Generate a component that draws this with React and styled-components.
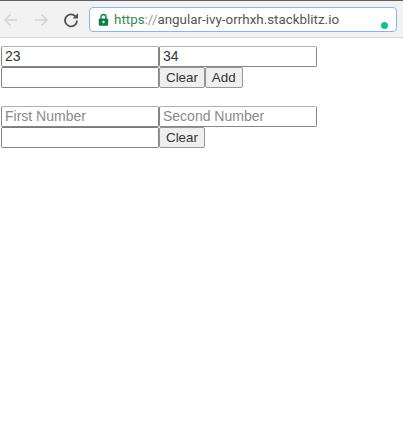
import React from 'react';
import styled, { createGlobalStyle } from 'styled-components';

const Global = createGlobalStyle`
  html, body { margin: 0; padding: 0; background: #fff; }
  body { font-family: "Liberation Sans", Arial, sans-serif; }
`;

const Page = styled.div`
  width: 403px;
  height: 434px;
  overflow: hidden;
  background: #fff;
`;

const Toolbar = styled.div`
  box-sizing: border-box;
  height: 38px;
  display: flex;
  align-items: center;
  padding: 1px 6px 0 1px;
  background: #f2f2f2;
  border-top: 1px solid #5f5f5f;
  border-bottom: 1px solid #d4d4d4;
`;

const NavIcon = styled.svg`
  width: 20px;
  height: 20px;
  margin-right: ${p => p.$gap}px;
  fill: none;
  stroke: ${p => p.$color};
  stroke-width: ${p => p.$weight};
  flex: none;
`;

const AddressBar = styled.div`
  box-sizing: border-box;
  flex: 1;
  height: 25px;
  position: relative;
  display: flex;
  align-items: center;
  gap: 5px;
  padding: 0 7px 0 8px;
  background: #fff;
  border: 1px solid #8ab4ee;
  border-radius: 4px;
  font-family: Roboto, sans-serif;
  font-size: 13.4px;
  color: #555;
`;

const Url = styled.span`
  white-space: nowrap;
`;

const Https = styled.span`
  color: #35875a;
`;

const Slashes = styled.span`
  color: #9a9a9a;
`;

const StatusDot = styled.span`
  position: absolute;
  right: 8px;
  bottom: 2px;
  width: 7px;
  height: 7px;
  border-radius: 50%;
  background: #14c08f;
`;

const Content = styled.div`
  padding: 8px 1px 0;
`;

const Calc = styled.form`
  margin: 0 0 18px;
`;

const Row = styled.div`
  display: flex;
`;

const NumberInput = styled.input`
  box-sizing: border-box;
  width: 158px;
  height: 21px;
  margin: 0;
  padding: 0 3px 2px;
  border: 1px solid #858585;
  border-top-color: ${p => p.$first ? '#b0b0b0' : '#7c7c7c'};
  border-radius: 2px;
  background: #fff;
  color: #333;
  font-family: "Liberation Sans", Arial, sans-serif;
  font-size: 14px;
  outline: none;

  &::placeholder {
    color: #8a8a8a;
    opacity: 1;
  }
`;

const ActionButton = styled.button`
  box-sizing: border-box;
  height: 21px;
  margin: 0;
  padding: 0 6px 1px;
  border: 1px solid #969696;
  border-radius: 2px;
  background: #efefef;
  color: #333;
  font-family: "Liberation Sans", Arial, sans-serif;
  font-size: 13.33px;
`;

function Calculator({ first, second, firstHint, secondHint, withAdd }) {
  return (
    <Calc onSubmit={e => e.preventDefault()}>
      <Row>
        <NumberInput $first defaultValue={first} placeholder={firstHint} />
        <NumberInput $first defaultValue={second} placeholder={secondHint} />
      </Row>
      <Row>
        <NumberInput />
        <ActionButton type="button">Clear</ActionButton>
        {withAdd && <ActionButton type="button">Add</ActionButton>}
      </Row>
    </Calc>
  );
}

export default function App() {
  return (
    <Page>
      <Global />
      <Toolbar>
        <NavIcon viewBox="0 0 20 20" $color="#d4d4d4" $weight={1.6} $gap={10}>
          <path d="M16 10H4M9.5 4.5L4 10l5.5 5.5" />
        </NavIcon>
        <NavIcon viewBox="0 0 20 20" $color="#d4d4d4" $weight={1.6} $gap={10}>
          <path d="M4 10h12M10.5 4.5L16 10l-5.5 5.5" />
        </NavIcon>
        <NavIcon viewBox="0 0 20 20" $color="#555" $weight={1.9} $gap={8}>
          <path d="M14.4 6.3A6 6 0 1 0 16 10.5" />
          <path d="M17 3v5.4h-5.4z" fill="#555" stroke="none" />
        </NavIcon>
        <AddressBar>
          <svg width="11" height="13" viewBox="0 0 11 13" style={{ flex: 'none' }}>
            <path d="M3 6V4a2.5 2.5 0 0 1 5 0v2" fill="none" stroke="#0b8043" strokeWidth="1.4" />
            <rect x="0.8" y="5.5" width="9.4" height="7.2" rx="1" fill="#0b8043" />
            <circle cx="5.5" cy="9" r="1.2" fill="#fff" />
          </svg>
          <Url><Https>https</Https><Slashes>://</Slashes>angular-ivy-orrhxh.stackblitz.io</Url>
          <StatusDot />
        </AddressBar>
      </Toolbar>
      <Content>
        <Calculator first="23" second="34" withAdd />
        <Calculator firstHint="First Number" secondHint="Second Number" />
      </Content>
    </Page>
  );
}
